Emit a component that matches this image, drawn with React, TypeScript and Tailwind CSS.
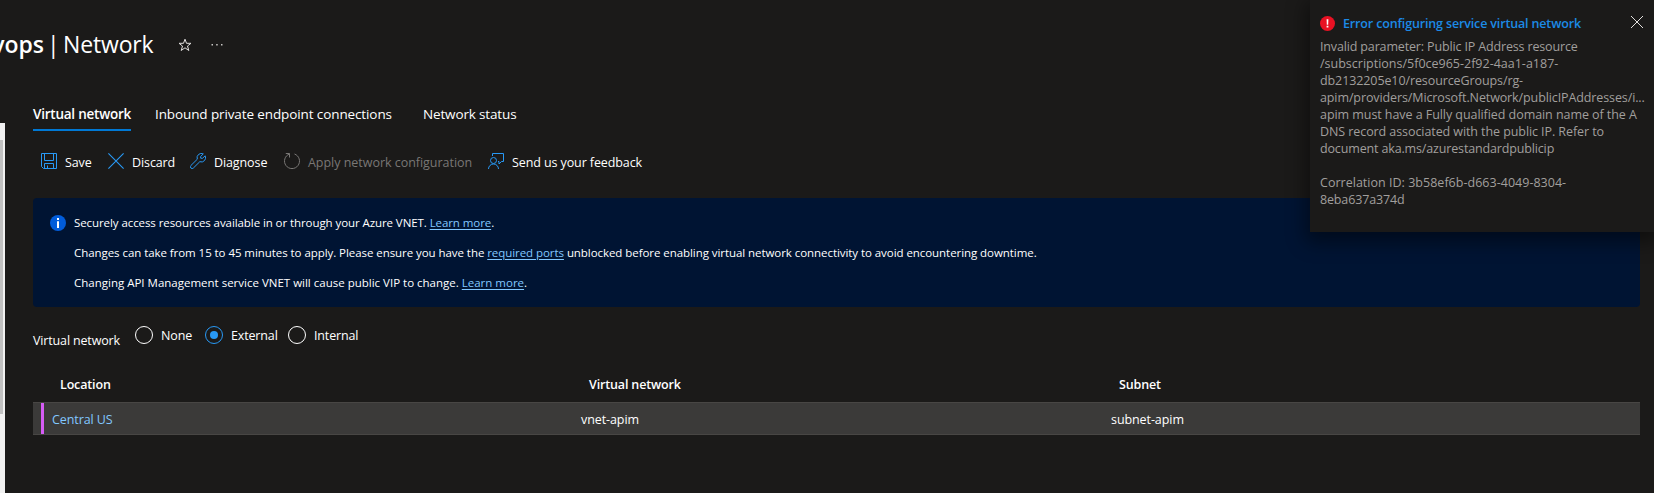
import type { ReactNode } from 'react'

function SaveIcon() {
  return (
    <svg className="size-4 shrink-0 text-[#2899f5]" viewBox="0 0 16 16" fill="none" stroke="currentColor">
      <path d="M.5.5h15v15H2.5l-2-2zM3.500.5v7h9v-7M3.500 15.500v-5h9v5M6.500 15.500v-3" />
    </svg>
  )
}

function DiscardIcon() {
  return (
    <svg className="size-4 shrink-0 text-[#2899f5]" viewBox="0 0 16 16" fill="none" stroke="currentColor" strokeWidth="1.1">
      <path d="M.4.400l15.200 15.200M15.600.400L.400 15.600" />
    </svg>
  )
}

function WrenchIcon() {
  return (
    <svg className="size-4 shrink-0 text-[#2899f5]" viewBox="0 0 16 16" fill="none" stroke="currentColor" strokeLinejoin="round">
      <path d="M13.300.9A4.300 4.300 0 0 0 7.300 6.200L.9 12.500a1.600 1.600 0 0 0 2.500 2.500L9.800 8.700A4.300 4.300 0 0 0 15.200 2.800L12.500 5.300 10.700 5.200 10.600 3.500z" />
    </svg>
  )
}

function RefreshIcon() {
  return (
    <svg className="size-4 shrink-0 text-[#797775]" viewBox="0 0 16 16" fill="none" stroke="currentColor">
      <path d="M10.500 1A7.500 7.500 0 1 1 5.500 1M1.800.5H5.500V4.500" />
    </svg>
  )
}

function FeedbackIcon() {
  return (
    <svg className="size-4 shrink-0 text-[#2899f5]" viewBox="0 0 16 16" fill="none" stroke="currentColor">
      <path d="M4.500 3v-2.500h11v8h-2l-2.500 2.500v-2.500h-1" />
      <circle cx="5.500" cy="7.500" r="3" />
      <path d="M.5 16a5 5 0 0 1 10 0" />
    </svg>
  )
}

function Command({ icon, width, className, children }: { icon: ReactNode; width: string; className?: string; children: ReactNode }) {
  return (
    <button className={`flex items-start gap-2 tracking-[-0.1px] ${className ?? ''}`}>
      {icon}
      <span className={`text-left leading-5 ${width}`}>{children}</span>
    </button>
  )
}

function Radio({ label, checked, width }: { label: string; checked?: boolean; width: string }) {
  return (
    <label className="flex items-start">
      <span className={`flex size-[18px] shrink-0 items-center justify-center rounded-full border ${checked ? 'border-[#2899f5]' : 'border-white'}`}>
        {checked && <span className="size-2 rounded-full bg-[#2899f5]" />}
      </span>
      <span className={`ml-2 leading-5 ${width}`}>{label}</span>
    </label>
  )
}

function Link({ children }: { children: ReactNode }) {
  return <a className="text-[#82c7ff] underline underline-offset-2">{children}</a>
}

export default function App() {
  return (
    <div className="relative flex h-[493px] w-[1654px] overflow-hidden whitespace-nowrap bg-[#1b1a19] font-['Open_Sans','Segoe_UI',sans-serif] text-[12.5px] tracking-[-0.15px] text-white">
      <div className="mt-[123px] w-[5px] shrink-0 bg-[#f1f1f1] pt-[17px]">
        <div className="h-[274px] w-[3px] bg-[#c1c1c1]" />
      </div>

      <main className="ml-7 w-[1607px] shrink-0">
        <header className="-ml-[33px] flex h-[90px] items-center pb-0.5 text-[23px] leading-8 tracking-normal">
          <h1 className="flex">
            <span className="flex w-[44px] justify-end font-semibold">vops</span>
            <span className="ml-[3px] w-4">|</span>
            <span className="w-[91px] tracking-[-0.15px]">Network</span>
          </h1>
          <svg className="ml-6 mt-0.5 size-[14px]" viewBox="0 0 14 14" fill="none" stroke="#e1dfdd">
            <path d="M7 1.200l1.500 4.100h4.500L9.500 8l1.300 4.500L7 9.800l-3.800 2.700L4.500 8 1 5.300h4.500z" />
          </svg>
          <svg className="ml-[19px] mt-0.5 h-1 w-3" viewBox="0 0 12 4" fill="#c8c6c4">
            <path d="M.5 1h1.500v1.500H.5zM5.200 1h1.500v1.500H5.200zM10 1h1.500v1.500H10z" />
          </svg>
        </header>

        <nav className="flex pt-[14px] text-[13.5px] leading-5 tracking-[-0.11px]">
          <a className="h-[27px] w-[98px] border-b-2 border-[#0078d4] font-semibold tracking-[-0.23px]">Virtual network</a>
          <a className="ml-6 w-[237px]">Inbound private endpoint connections</a>
          <a className="ml-[31px] tracking-[-0.15px]">Network status</a>
        </nav>

        <div className="flex h-[67px] items-start pl-2 pt-[22px]">
          <Command icon={<SaveIcon />} width="w-[27px]">Save</Command>
          <Command className="ml-4" icon={<DiscardIcon />} width="w-[42px]">Discard</Command>
          <Command className="ml-4" icon={<WrenchIcon />} width="w-[54px]">Diagnose</Command>
          <Command className="ml-4 tracking-[-0.03px] text-[#797775]" icon={<RefreshIcon />} width="w-[164px]">Apply network configuration</Command>
          <Command className="ml-4" icon={<FeedbackIcon />} width="w-[131px]">Send us your feedback</Command>
        </div>

        <section className="flex h-[109px] rounded-sm bg-[#001433] pl-[17px] pt-[10px] text-[11.5px] tracking-[-0.06px]">
          <svg className="mt-[7px] size-4 shrink-0" viewBox="0 0 16 16">
            <circle cx="8" cy="8" r="8" fill="#015cda" />
            <path d="M7 3h2v2H7zM7 6.300h2V13H7z" fill="#fff" />
          </svg>
          <div className="ml-2 leading-[30px]">
            <p className="tracking-[-0.08px]">Securely access resources available in or through your Azure VNET. <Link>Learn more</Link>.</p>
            <p>Changes can take from 15 to 45 minutes to apply. Please ensure you have the <Link>required ports</Link> unblocked before enabling virtual network connectivity to avoid encountering downtime.</p>
            <p className="tracking-normal">Changing API Management service VNET will cause public VIP to change. <Link>Learn more</Link>.</p>
          </div>
        </section>

        <div className="flex h-[62px] items-start pt-[18px]">
          <span className="mt-[6px] w-[102px] leading-5">Virtual network</span>
          <div className="flex gap-3 pt-px">
            <Radio label="None" width="w-8" />
            <Radio label="External" width="w-[45px]" checked />
            <Radio label="Internal" width="w-[45px]" />
          </div>
        </div>

        <div className="grid h-[33px] grid-cols-[530px_530px_1fr] pt-[6px] font-semibold leading-5">
          <span className="pl-[27px]">Location</span>
          <span className="pl-[26px]">Virtual network</span>
          <span className="pl-[26px]">Subnet</span>
        </div>
        <div className="grid h-[33px] grid-cols-[530px_530px_1fr] items-center border-y border-[#484644] bg-[#3b3a39] leading-5 tracking-[-0.08px]">
          <span className="ml-2 flex h-[31px] items-center border-l-[3px] border-[#d65cf5] pl-2 pt-0.5 text-[#82c7ff]">Central US</span>
          <span className="pl-[18px] pt-0.5">vnet-apim</span>
          <span className="pl-[18px] pt-0.5">subnet-apim</span>
        </div>
      </main>

      <aside className="absolute right-0 top-0 h-[232px] w-[344px] bg-[#1b1a19] pl-[10px] pt-[14px] text-[#a19f9d] shadow-[0_6px_18px_4px_rgba(0,0,0,0.45)]">
        <div className="flex h-6 items-start">
          <svg className="mt-0.5 size-[15px]" viewBox="0 0 15 15">
            <circle cx="7.500" cy="7.500" r="7.500" fill="#e81123" />
            <path d="M6.600 3.200h1.800L8.200 8.700H6.800zM6.600 9.800h1.800v1.800H6.600z" fill="#fff" />
          </svg>
          <h2 className="ml-2 w-[288px] font-semibold leading-5 text-[#1c8ae6]">Error configuring service virtual network</h2>
          <svg className="mt-0.5 size-3" viewBox="0 0 12 12" stroke="#e1dfdd">
            <path d="M0 0l12 12M12 0L0 12" />
          </svg>
        </div>
        <p className="leading-[17px]">
          Invalid parameter: Public IP Address resource<br />
          <span className="tracking-normal">/subscriptions/5f0ce965-2f92-4aa1-a187-</span><br />
          <span className="tracking-[-0.1px]">db2132205e10/resourceGroups/rg-</span><br />
          <span className="tracking-[-0.11px]">apim/providers/Microsoft.Network/publicIPAddresses/i...</span><br />
          <span className="tracking-[-0.06px]">apim must have a Fully qualified domain name of the A</span><br />
          <span className="tracking-[-0.08px]">DNS record associated with the public IP. Refer to</span><br />
          document aka.ms/azurestandardpublicip<br />
          <br />
          <span className="tracking-[0.02px]">Correlation ID: 3b58ef6b-d663-4049-8304-</span><br />
          8eba637a374d
        </p>
      </aside>
    </div>
  )
}
